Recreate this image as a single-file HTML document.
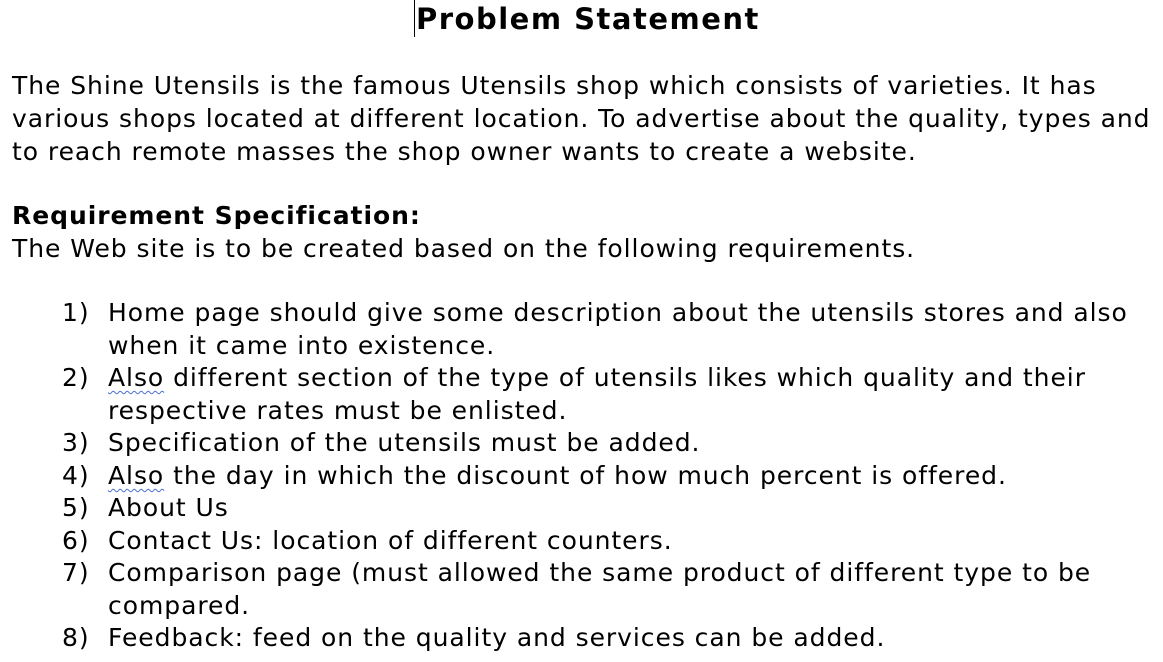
<!DOCTYPE html>
<html><head><meta charset="utf-8"><style>
html,body{margin:0;padding:0;background:#fff;width:1163px;height:662px;overflow:hidden}
body{font-family:"DejaVu Sans","Liberation Sans",sans-serif;font-size:25px;letter-spacing:0.95px;color:#000;position:relative}
.l{position:absolute;white-space:nowrap;line-height:32px;height:32px}
.b{font-weight:bold}
.n{left:62px}
.t{left:108px}
.sq{text-decoration:underline wavy #4a6fd0;text-decoration-thickness:1px;text-underline-offset:4px}
.cur{position:absolute;left:414px;top:0;width:1px;height:37px;background:#000}
</style></head><body>
<div class="cur"></div>
<div class="l b" style="left:416px;top:3px;font-size:29px;letter-spacing:1.5px">Problem Statement</div>
<div class="l" style="left:12px;top:70px">The Shine Utensils is the famous Utensils shop which consists of varieties. It has</div>
<div class="l" style="left:12px;top:103px">various shops located at different location. To advertise about the quality, types and</div>
<div class="l" style="left:12px;top:136px">to reach remote masses the shop owner wants to create a website.</div>
<div class="l b" style="left:12px;top:200px">Requirement Specification:</div>
<div class="l" style="left:12px;top:233px">The Web site is to be created based on the following requirements.</div>
<div class="l n" style="top:297px">1)</div><div class="l t" style="top:297px">Home page should give some description about the utensils stores and also</div>
<div class="l t" style="top:330px">when it came into existence.</div>
<div class="l n" style="top:362px">2)</div><div class="l t" style="top:362px"><span class="sq">Also</span> different section of the type of utensils likes which quality and their</div>
<div class="l t" style="top:395px">respective rates must be enlisted.</div>
<div class="l n" style="top:427px">3)</div><div class="l t" style="top:427px">Specification of the utensils must be added.</div>
<div class="l n" style="top:460px">4)</div><div class="l t" style="top:460px"><span class="sq">Also</span> the day in which the discount of how much percent is offered.</div>
<div class="l n" style="top:492px">5)</div><div class="l t" style="top:492px">About Us</div>
<div class="l n" style="top:525px">6)</div><div class="l t" style="top:525px">Contact Us: location of different counters.</div>
<div class="l n" style="top:557px">7)</div><div class="l t" style="top:557px">Comparison page (must allowed the same product of different type to be</div>
<div class="l t" style="top:590px">compared.</div>
<div class="l n" style="top:622px">8)</div><div class="l t" style="top:622px">Feedback: feed on the quality and services can be added.</div>
</body></html>
